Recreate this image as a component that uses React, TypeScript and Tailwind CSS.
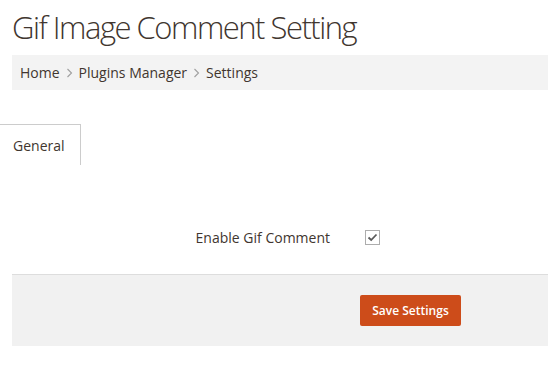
function Chevron() {
  return (
    <svg className="mx-[6px]" width="7" height="10" viewBox="0 0 7 10"><path d="M1.5 1 L5.5 5 L1.5 9" stroke="#a0a0a0" strokeWidth="1.1" fill="none" /></svg>
  );
}

export default function App() {
  return (
    <div className="w-[548px] h-[377px] bg-white overflow-hidden text-[#41362f]" style={{ fontFamily: '"Open Sans", sans-serif' }}>
      <h1 className="ml-[12px] pt-[7px] h-[55px] text-[31px] font-light tracking-[-1.5px] leading-[40px] text-[#41362f]">Gif Image Comment Setting</h1>
      <div className="ml-[12px] h-[35px] bg-[#f3f3f3] flex items-center pl-[8px] text-[14px] text-[#41362f]">
        <span>Home</span>
        <Chevron />
        <span>Plugins Manager</span>
        <Chevron />
        <span>Settings</span>
      </div>
      <div className="mt-[34px] flex">
        <div className="w-[81px] h-[41px] border-t border-r border-[#cccccc] flex items-center pl-[13px] text-[14px] text-[#41362f]">General</div>
      </div>
      <div className="mt-[58px] h-[28px] flex items-center">
        <div className="w-[330px] text-right text-[14px] text-[#41362f]">Enable Gif Comment</div>
        <div className="ml-[35px] w-[15px] h-[15px] border border-[#adadad] bg-white flex items-center justify-center">
          <svg width="11" height="11" viewBox="0 0 11 11"><path d="M1.5 5.5 L4.2 8 L9.5 2.5" stroke="#5a5a5a" strokeWidth="1.8" fill="none" /></svg>
        </div>
      </div>
      <div className="mt-[23px] ml-[12px] h-[72px] bg-[#f1f1f1] border-t border-[#dddddd] flex items-center">
        <button className="ml-[348px] w-[101px] h-[31px] bg-[#cd4c1a] rounded-[2px] text-white text-[12px] font-semibold">Save Settings</button>
      </div>
    </div>
  );
}
